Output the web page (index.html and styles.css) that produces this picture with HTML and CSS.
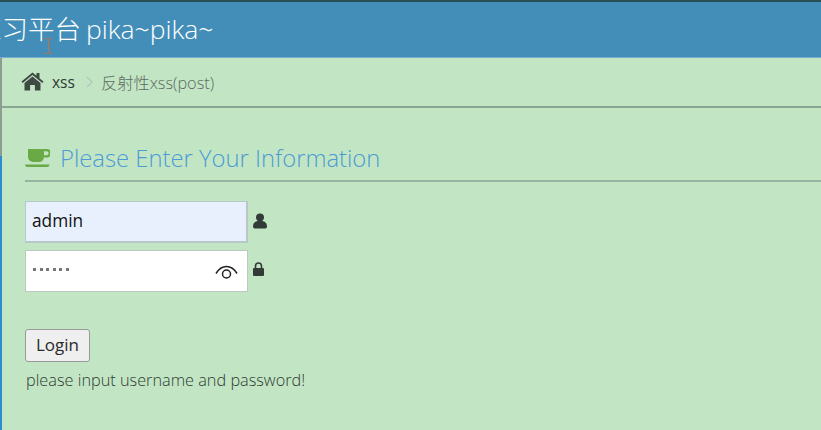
FILE: index.html
```html
<!DOCTYPE html>
<html lang="zh">
<head>
<meta charset="utf-8">
<title>反射性xss(post)</title>
<link rel="stylesheet" href="styles.css">
</head>
<body>
<header class="navbar">
  <span class="brand">练习平台 pika~pika~</span>
  <svg class="ibeam" width="7" height="16" viewBox="0 0 7 16"><path d="M0 .5h2.500L3.500 1.500 4.500 .5H7M3.500 1.500v13M0 15.500h2.500l1-1 1 1H7" fill="none" stroke="#c2704a" stroke-width="1"/></svg>
</header>
<div class="page">
  <nav class="crumbs">
    <svg class="home" width="23" height="19" viewBox="0 0 23 19"><path d="M11.500 0.500 0.500 9.600l1.200 1.400L11.500 3l9.800 8 1.200-1.400-4-3.300V1h-3v2.800z M3.500 11v7.500h5.600v-5.400h4.800v5.400h5.600V11l-8-6.500z" fill="#3f4a44"/></svg>
    <span class="crumb-link">xss</span>
    <svg class="sep" width="7" height="12" viewBox="0 0 7 12"><path d="M1 1l5 5-5 5" fill="none" stroke="#b6c4bd" stroke-width="1.300"/></svg>
    <span class="crumb-now">反射性xss(post)</span>
  </nav>
  <main class="content">
    <h4 class="title">
      <svg class="cup" width="25" height="19" viewBox="0 0 25 19"><path d="M3 0h19a3 3 0 0 1 0 8.500h-3.200A5 5 0 0 1 14 13H8a5 5 0 0 1-5-5z M19 2.300v4h2.600a2 2 0 0 0 0-4z M0 15.500h24.500c0 1.500-1 2.500-2.500 2.500H2.500C1 18 0 17 0 15.500z" fill="#69aa46" fill-rule="evenodd"/></svg>
      <span>Please Enter Your Information</span>
    </h4>
    <form class="form">
      <div class="row">
        <div class="field filled">admin</div>
        <svg class="side user" width="14" height="16" viewBox="0 0 14 16"><path d="M7 0.500a4 4 0 0 1 4 4c0 1.500-.8 2.800-1.800 3.500C12 8.500 14 10 14 13.500c0 1.500-1 2-2 2H2c-1 0-2-.5-2-2C0 10 2 8.500 4.800 8 3.800 7.300 3 6 3 4.500a4 4 0 0 1 4-4z" fill="#333b36"/></svg>
      </div>
      <div class="row second">
        <div class="field">
          <span class="dots"><i></i><i></i><i></i><i></i><i></i><i></i></span>
          <svg class="eye" width="23" height="15" viewBox="0 0 23 15"><path d="M1 8.500C4 3.500 7.500 1.500 11.500 1.500s7.500 2 10.500 7" fill="none" stroke="#222" stroke-width="1.500"/><circle cx="11.500" cy="9" r="4" fill="none" stroke="#222" stroke-width="1.500"/></svg>
        </div>
        <svg class="side lock" width="11" height="14" viewBox="0 0 11 14"><path d="M2.500 6V4a3 3 0 0 1 6 0v2" fill="none" stroke="#333b36" stroke-width="1.600"/><rect x="0" y="6" width="11" height="8" rx="1" fill="#333b36"/></svg>
      </div>
      <button class="login" type="button">Login</button>
      <p class="msg">please input username and password!</p>
    </form>
  </main>
</div>
</body>
</html>
```
FILE: styles.css
```css
* { box-sizing: border-box; }
html, body { margin: 0; height: 100%; overflow: hidden; }
body {
  width: 821px;
  height: 430px;
  background: #c2e6c4;
  font-family: "Open Sans", "Noto Sans CJK SC", sans-serif;
  display: flex;
  flex-direction: column;
}
.navbar {
  height: 58px;
  flex: none;
  background: #438eb9;
  border-top: 2px solid #2a4f55;
  border-bottom: 1px solid #76add0;
  display: flex;
  align-items: center;
  position: relative;
  overflow: hidden;
}
.brand {
  margin-left: -25px;
  margin-top: -1px;
  color: #fff;
  font-size: 26.500px;
  font-weight: 300;
  line-height: 32px;
  word-spacing: -2px;
  white-space: nowrap;
}
.ibeam { position: absolute; left: 45px; top: 36px; }
.page {
  flex: 1;
  display: flex;
  flex-direction: column;
}
.crumbs {
  height: 50px;
  flex: none;
  display: flex;
  align-items: center;
  padding-left: 21px;
  border-left: 2px solid #8c9c90;
  border-bottom: 2px solid #8aa592;
}
.home { margin-left: -2px; margin-right: 8px; margin-top: -2px; }
.crumb-link { color: #2f3a33; margin-right: 11px; font-size: 15.500px; }
.sep { margin-right: 8px; }
.crumb-now { color: #5f6a63; font-size: 16.300px; font-weight: 300; }
.content {
  flex: 1;
  padding: 42px 0 0 25px;
  position: relative;
}
.content::before {
  content: "";
  position: absolute;
  left: 0;
  top: 0;
  bottom: 0;
  width: 2px;
  background: linear-gradient(#8c9c90 0, #8c9c90 48px, #2f8ad0 48px);
}
.title {
  margin: 0;
  height: 32px;
  display: flex;
  align-items: center;
  gap: 10px;
  padding-bottom: 14px;
  border-bottom: 2px solid #98b39f;
  color: #4d9ad6;
  font-size: 23.800px;
  font-weight: 300;
  white-space: nowrap;
}
.cup { flex: none; margin-top: 1px; }
.form { padding-top: 19px; }
.row { display: flex; align-items: center; }
.row.second { margin-top: 7px; }
.field {
  width: 223px;
  height: 42px;
  background: #fff;
  border: 1px solid #bcc8c0;
  display: flex;
  align-items: center;
  justify-content: space-between;
  padding: 0 9px 0 6px;
  font-size: 17.300px;
  line-height: 24px;
  color: #111;
}
.field.filled { background: #e8f0fe; border-color: #b8c8c8; border-width: 1px 2px 2px 1px; padding-bottom: 2px; }
.dots { display: flex; gap: 3.500px; margin: -3px 0 0 1px; }
.dots i { width: 3px; height: 3px; background: #777; display: block; }
.eye { margin-top: 2px; }
.side { margin-left: 5px; margin-top: 1px; }
.side.user { margin-top: -2px; }
.side.lock { margin-left: 5px; margin-top: -5px; }
.login {
  display: block;
  margin-top: 37px;
  width: 65px;
  height: 33px;
  padding: 0 0 2px;
  background: #efefef;
  border: 1px solid #999;
  border-radius: 3px;
  color: #2a2a2a;
  font: 17px "Open Sans", sans-serif;
}
.msg {
  margin: 8px 0 0 1px;
  font-size: 16.300px;
  font-weight: 300;
  line-height: 20px;
  color: #2f3a33;
}
```
